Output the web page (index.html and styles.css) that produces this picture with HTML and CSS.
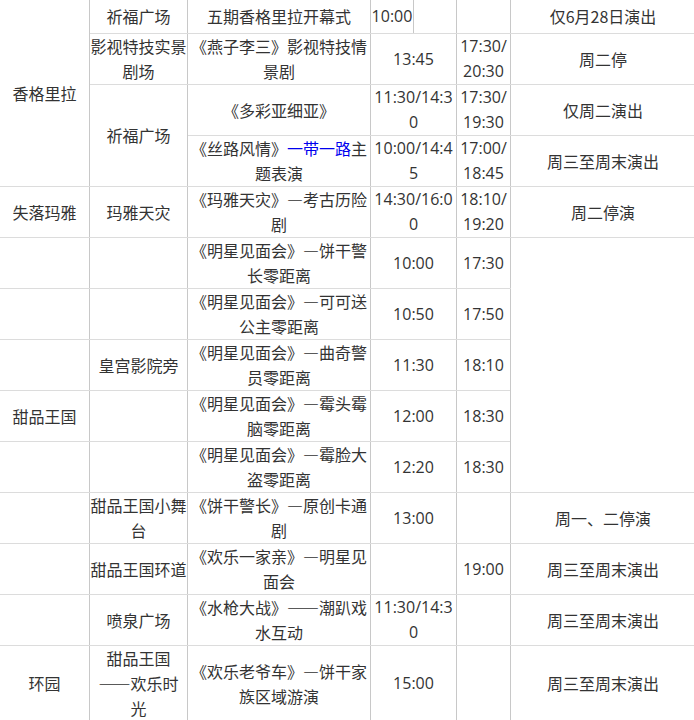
FILE: index.html
```html
<!DOCTYPE html>
<html lang="zh-CN">
<head>
<meta charset="utf-8">
<title>演出时间表</title>
<link rel="stylesheet" href="styles.css">
</head>
<body>
<table class="schedule">
  <colgroup>
    <col class="c-area"><col class="c-place"><col class="c-show"><col class="c-t1a"><col class="c-t1b"><col class="c-t2"><col class="c-note">
  </colgroup>
  <tbody>
    <tr class="first">
      <td rowspan="4">香格里拉</td>
      <td>祈福广场</td>
      <td>五期香格里拉开幕式</td>
      <td class="time">10:00</td>
      <td class="time"></td>
      <td class="time"></td>
      <td>仅6月28日演出</td>
    </tr>
    <tr>
      <td>影视特技实景剧场</td>
      <td>《燕子李三》影视特技情景剧</td>
      <td class="time" colspan="2">13:45</td>
      <td class="time">17:30/20:30</td>
      <td>周二停</td>
    </tr>
    <tr>
      <td rowspan="2">祈福广场</td>
      <td>《多彩亚细亚》</td>
      <td class="time" colspan="2">11:30/14:30</td>
      <td class="time">17:30/19:30</td>
      <td>仅周二演出</td>
    </tr>
    <tr>
      <td>《丝路风情》<span class="link">一带一路</span>主题表演</td>
      <td class="time" colspan="2">10:00/14:45</td>
      <td class="time">17:00/18:45</td>
      <td>周三至周末演出</td>
    </tr>
    <tr>
      <td>失落玛雅</td>
      <td>玛雅天灾</td>
      <td>《玛雅天灾》—考古历险剧</td>
      <td class="time" colspan="2">14:30/16:00</td>
      <td class="time">18:10/19:20</td>
      <td>周二停演</td>
    </tr>
    <tr>
      <td></td>
      <td></td>
      <td>《明星见面会》—饼干警长零距离</td>
      <td class="time" colspan="2">10:00</td>
      <td class="time">17:30</td>
      <td rowspan="5"></td>
    </tr>
    <tr>
      <td></td>
      <td></td>
      <td>《明星见面会》—可可送公主零距离</td>
      <td class="time" colspan="2">10:50</td>
      <td class="time">17:50</td>
    </tr>
    <tr>
      <td></td>
      <td>皇宫影院旁</td>
      <td>《明星见面会》—曲奇警员零距离</td>
      <td class="time" colspan="2">11:30</td>
      <td class="time">18:10</td>
    </tr>
    <tr>
      <td>甜品王国</td>
      <td></td>
      <td>《明星见面会》—霉头霉脑零距离</td>
      <td class="time" colspan="2">12:00</td>
      <td class="time">18:30</td>
    </tr>
    <tr>
      <td></td>
      <td></td>
      <td>《明星见面会》—霉脸大盗零距离</td>
      <td class="time" colspan="2">12:20</td>
      <td class="time">18:30</td>
    </tr>
    <tr>
      <td></td>
      <td>甜品王国小舞台</td>
      <td>《饼干警长》—原创卡通剧</td>
      <td class="time" colspan="2">13:00</td>
      <td class="time"></td>
      <td>周一、二停演</td>
    </tr>
    <tr>
      <td></td>
      <td>甜品王国环道</td>
      <td>《欢乐一家亲》—明星见面会</td>
      <td class="time" colspan="2"></td>
      <td class="time">19:00</td>
      <td>周三至周末演出</td>
    </tr>
    <tr>
      <td></td>
      <td>喷泉广场</td>
      <td>《水枪大战》——潮趴戏水互动</td>
      <td class="time" colspan="2">11:30/14:30</td>
      <td class="time"></td>
      <td>周三至周末演出</td>
    </tr>
    <tr>
      <td>环园</td>
      <td>甜品王国<br>——欢乐时<br>光</td>
      <td>《欢乐老爷车》—饼干家族区域游演</td>
      <td class="time" colspan="2">15:00</td>
      <td class="time"></td>
      <td>周三至周末演出</td>
    </tr>
  </tbody>
</table>
</body>
</html>
```
FILE: styles.css
```css
html, body {
  margin: 0;
  padding: 0;
  overflow: hidden;
  background: #fff;
}

.schedule {
  border-collapse: collapse;
  table-layout: fixed;
  width: 696px;
  margin: -1px 0 0 -1px;
  font-family: "Noto Sans CJK SC", "Open Sans", sans-serif;
  font-size: 16px;
  line-height: 25px;
  color: #333;
}

.c-area { width: 90px; }
.c-place { width: 98px; }
.c-show { width: 183px; }
.c-t1a { width: 43px; }
.c-t1b { width: 43px; }
.c-t2 { width: 54px; }
.c-note { width: 185px; }

.schedule td {
  padding: 0;
  text-align: center;
  vertical-align: middle;
  word-break: break-all;
  border-left: 1px solid #c8c8c8;
  border-right: 1px solid #c8c8c8;
  border-top: 1px solid #dcdcdc;
  border-bottom: 1px solid #dcdcdc;
}

.schedule .first td {
  height: 33px;
}

.schedule td.time {
  font-family: "Open Sans", "Noto Sans CJK SC", sans-serif;
}

.link {
  color: #0000ee;
}
```
